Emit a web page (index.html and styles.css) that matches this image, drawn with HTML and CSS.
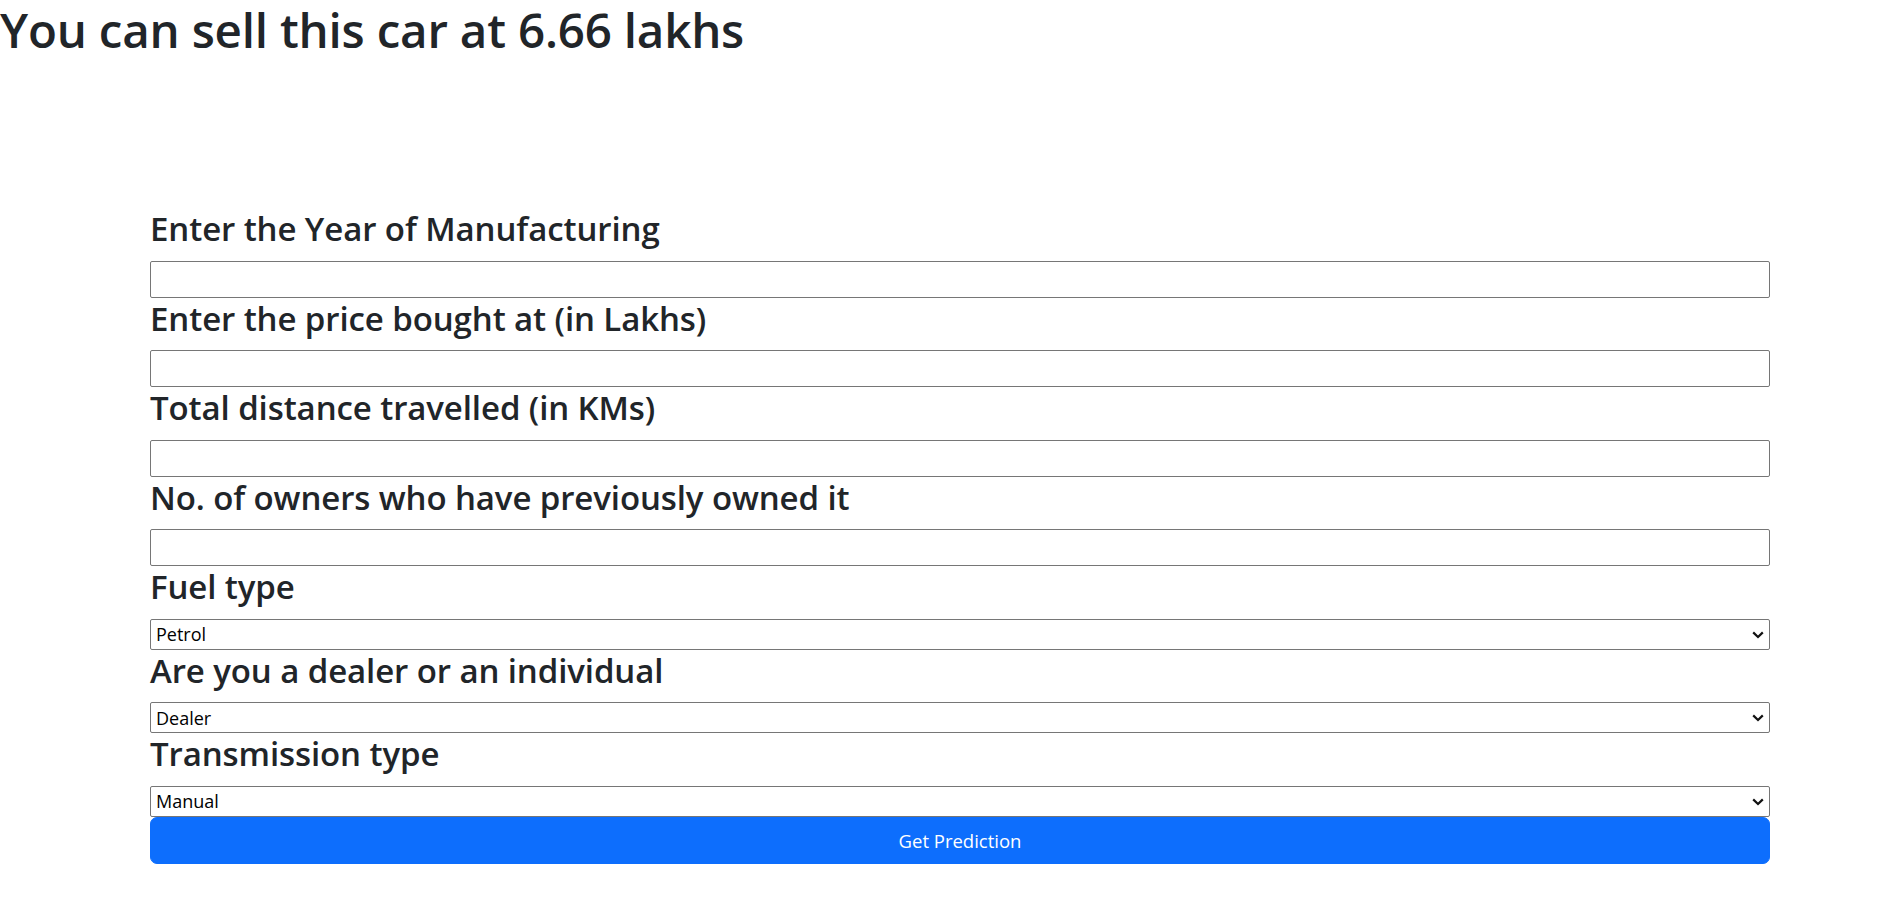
FILE: index.html
```html
<!DOCTYPE html>
<html lang="en">
<head>
<meta charset="utf-8">
<title>Car Price Prediction</title>
<link rel="stylesheet" href="styles.css">
</head>
<body>
<h1 class="result">You can sell this car at 6.66 lakhs</h1>
<form class="form">
  <h3 class="label">Enter the Year of Manufacturing</h3>
  <input class="field" type="text">
  <h3 class="label">Enter the price bought at (in Lakhs)</h3>
  <input class="field" type="text">
  <h3 class="label">Total distance travelled (in KMs)</h3>
  <input class="field" type="text">
  <h3 class="label">No. of owners who have previously owned it</h3>
  <input class="field" type="text">
  <h3 class="label">Fuel type</h3>
  <div class="select-wrap">
    <select class="select"><option>Petrol</option><option>Diesel</option><option>CNG</option></select>
    <svg class="chev" width="12" height="8" viewBox="0 0 12 8"><path d="M1.2 1.4 L6 6 L10.8 1.4" fill="none" stroke="#111" stroke-width="2.2"/></svg>
  </div>
  <h3 class="label">Are you a dealer or an individual</h3>
  <div class="select-wrap">
    <select class="select"><option>Dealer</option><option>Individual</option></select>
    <svg class="chev" width="12" height="8" viewBox="0 0 12 8"><path d="M1.2 1.4 L6 6 L10.8 1.4" fill="none" stroke="#111" stroke-width="2.2"/></svg>
  </div>
  <h3 class="label">Transmission type</h3>
  <div class="select-wrap">
    <select class="select"><option>Manual</option><option>Automatic</option></select>
    <svg class="chev" width="12" height="8" viewBox="0 0 12 8"><path d="M1.2 1.4 L6 6 L10.8 1.4" fill="none" stroke="#111" stroke-width="2.2"/></svg>
  </div>
  <button class="btn" type="button">Get Prediction</button>
</form>
</body>
</html>
```
FILE: styles.css
```css
html, body {
  margin: 0;
  padding: 0;
  background: #fff;
}
body {
  font-family: "Open Sans", "Noto Sans", sans-serif;
  color: #212529;
}
.result {
  font-size: 47.5px;
  font-weight: 600;
  line-height: 60px;
  margin: 0;
  letter-spacing: -0.2px;
}
.form {
  margin: 148px 0 0 150px;
  width: 1620px;
}
.label {
  font-size: 33px;
  font-weight: 600;
  line-height: 42px;
  margin: 0 0 10.5px 0;
  letter-spacing: -0.1px;
}
.field {
  display: block;
  box-sizing: border-box;
  width: 100%;
  height: 37px;
  margin: 0;
  border: 1px solid #767676;
  border-radius: 2px;
  background: #fff;
  padding: 0 6px;
  font-family: inherit;
  font-size: 18px;
}
.select-wrap {
  position: relative;
}
.select {
  display: block;
  box-sizing: border-box;
  width: 100%;
  height: 31px;
  margin: 0;
  border: 1px solid #767676;
  border-radius: 2px;
  background: #fff;
  padding: 0 5px;
  font-family: inherit;
  font-size: 18px;
  color: #000;
  appearance: none;
  -webkit-appearance: none;
}
.chev {
  position: absolute;
  right: 6px;
  top: 12px;
  pointer-events: none;
}
.btn {
  display: block;
  box-sizing: border-box;
  width: 100%;
  height: 47px;
  margin: 0;
  border: 1px solid #0d6efd;
  border-radius: 7px;
  background: #0d6efd;
  color: #fff;
  font-family: inherit;
  font-size: 18.5px;
  font-weight: 400;
}
```
